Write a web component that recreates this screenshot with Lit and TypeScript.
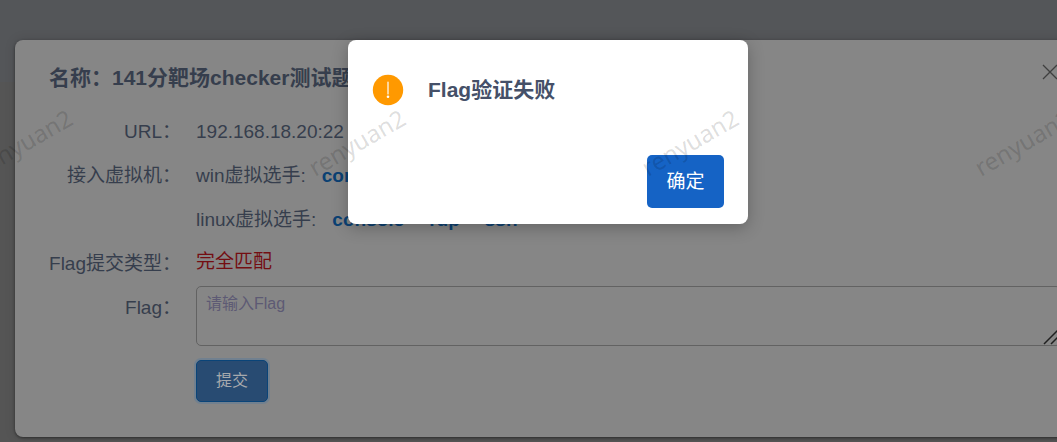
import { LitElement, html, css } from "lit";
import { customElement, state } from "lit/decorators.js";

interface Machine {
  name: string;
  links: string[];
}

@customElement("app-root")
export class AppRoot extends LitElement {
  @state() private machines: Machine[] = [
    { name: "win虚拟选手:", links: ["console", "rdp"] },
    { name: "linux虚拟选手:", links: ["console", "rdp", "ssh"] },
  ];

  static styles = css`
    :host {
      display: block;
      position: relative;
      min-height: 100vh;
      overflow: hidden;
      box-sizing: border-box;
      background: linear-gradient(#545659 0 82px, #555555 82px);
      font-family: "Liberation Sans", "Noto Sans CJK SC", sans-serif;
      font-size: 19px;
      color: #363e4d;
    }
    /* The page runs a little past the right edge of the window. */
    .stage {
      margin-right: -39px;
      padding: 40px 15px 5px;
    }
    .panel {
      position: relative;
      box-sizing: border-box;
      padding: 16px 20px 35px 34px;
      border-radius: 8px;
      background: #868686;
      box-shadow: 0 1px 3px rgba(0, 0, 0, 0.45), 0 0 12px rgba(0, 0, 0, 0.12);
    }
    .head {
      display: flex;
      justify-content: space-between;
      align-items: flex-start;
      height: 54px;
    }
    h1 {
      margin: 0;
      font-size: 21px;
      line-height: 44px;
      font-weight: 700;
      white-space: nowrap;
    }
    .close {
      width: 22px;
      height: 32px;
      padding: 0;
      border: 0;
      background: none;
      color: #3f3f3f;
    }
    .close svg {
      display: block;
      margin: 0 auto;
    }
    .form {
      display: grid;
      grid-template-columns: 132px minmax(0, 1fr);
      column-gap: 15px;
      line-height: 44px;
    }
    .label {
      text-align: right;
      white-space: nowrap;
    }
    .machine {
      display: flex;
      height: 44px;
    }
    .links {
      display: flex;
      gap: 25px;
      margin-left: 16px;
    }
    a {
      color: #0b4173;
      font-weight: 700;
      text-decoration: none;
    }
    .type {
      color: #740e12;
      line-height: 40px;
    }
    .field {
      position: relative;
      height: 60px;
    }
    textarea {
      display: block;
      box-sizing: border-box;
      width: 100%;
      height: 60px;
      padding: 5px 9px;
      border: 1px solid #626262;
      border-radius: 5px;
      background: transparent;
      color: inherit;
      font: 16px/24px "Liberation Sans", "Noto Sans CJK SC", sans-serif;
      resize: none;
      outline: none;
    }
    textarea::placeholder {
      color: #5d5a74;
      opacity: 1;
    }
    .grip {
      position: absolute;
      right: 2px;
      bottom: 1px;
    }
    .submit {
      grid-column: 2;
      justify-self: start;
      box-sizing: border-box;
      width: 72px;
      height: 42px;
      margin-top: 14px;
      padding: 0;
      border: 1px solid #0a4478;
      border-radius: 5px;
      background: #284b72;
      box-shadow: 0 0 0 2px #71808f;
      color: #a6a9ad;
      font: 16px/24px "Liberation Sans", "Noto Sans CJK SC", sans-serif;
    }
    .overlay {
      position: absolute;
      inset: 0 -39px 0 0;
      display: flex;
      justify-content: center;
      align-items: flex-start;
      padding-top: 40px;
    }
    .alert {
      box-sizing: border-box;
      width: 400px;
      padding: 34px 24px 16px;
      border-radius: 8px;
      background: #ffffff;
      box-shadow: 0 4px 16px rgba(0, 0, 0, 0.25);
    }
    .message {
      display: flex;
      align-items: center;
      gap: 24px;
      height: 32px;
    }
    h2 {
      margin: 0;
      color: #455068;
      font-size: 21px;
      line-height: 32px;
      font-weight: 700;
    }
    .actions {
      display: flex;
      justify-content: flex-end;
      margin-top: 49px;
    }
    .ok {
      width: 77px;
      height: 53px;
      padding: 0;
      border: 0;
      border-radius: 5px;
      background: #1563c5;
      color: #ffffff;
      font: 19px/28px "Liberation Sans", "Noto Sans CJK SC", sans-serif;
    }
    .marks {
      position: absolute;
      top: 0;
      left: 0;
      pointer-events: none;
    }
    .marks text {
      font-family: "Noto Sans", "Open Sans", sans-serif;
      font-size: 24px;
      fill: rgba(0, 0, 0, 0.14);
    }
  `;

  render() {
    return html`
      <div class="stage" lang="zh-CN">
        <main class="panel">
          <div class="head">
            <h1>名称：141分靶场checker测试题</h1>
            <button class="close" aria-label="关闭">
              <svg width="16" height="32" viewBox="0 0 16 32" fill="none" stroke="currentColor" stroke-width="1.3">
                <path d="M1 9 15 23M15 9 1 23" />
              </svg>
            </button>
          </div>
          <form class="form" @submit=${(e: Event) => e.preventDefault()}>
            <div class="label">URL：</div>
            <div>192.168.18.20:22</div>
            <div class="label">接入虚拟机：</div>
            <div>
              ${this.machines.map(
                (m) => html`<div class="machine">
                  <span>${m.name}</span>
                  <span class="links">${m.links.map((l) => html`<a href="#">${l}</a>`)}</span>
                </div>`
              )}
            </div>
            <div class="label">Flag提交类型：</div>
            <div class="type">完全匹配</div>
            <label class="label" for="flag">Flag：</label>
            <div class="field">
              <textarea id="flag" placeholder="请输入Flag"></textarea>
              <svg class="grip" width="16" height="16" viewBox="0 0 16 16" fill="none" stroke="#202020" stroke-width="1.5">
                <path d="M1 15 15 1M8 15 15 8" />
              </svg>
            </div>
            <button class="submit" type="submit">提交</button>
          </form>
        </main>
      </div>
      <div class="overlay" lang="zh-CN">
        <section class="alert" role="alertdialog" aria-labelledby="msg">
          <div class="message">
            <svg width="32" height="32" viewBox="0 0 32 32">
              <circle cx="16" cy="16" r="15.2" fill="#ff9900" />
              <path d="M16 8v12" stroke="#fff" stroke-width="1.2" stroke-linecap="round" />
              <circle cx="16" cy="22.8" r="1.3" fill="#fff" />
            </svg>
            <h2 id="msg">Flag验证失败</h2>
          </div>
          <div class="actions"><button class="ok">确定</button></div>
        </section>
      </div>
      <svg class="marks" width="100%" height="100%" aria-hidden="true">
        <text transform="translate(-18 177) rotate(-30)">renyuan2</text>
        <text transform="translate(315 177) rotate(-30)">renyuan2</text>
        <text transform="translate(648 177) rotate(-30)">renyuan2</text>
        <text transform="translate(981 177) rotate(-30)">renyuan2</text>
      </svg>
    `;
  }
}
